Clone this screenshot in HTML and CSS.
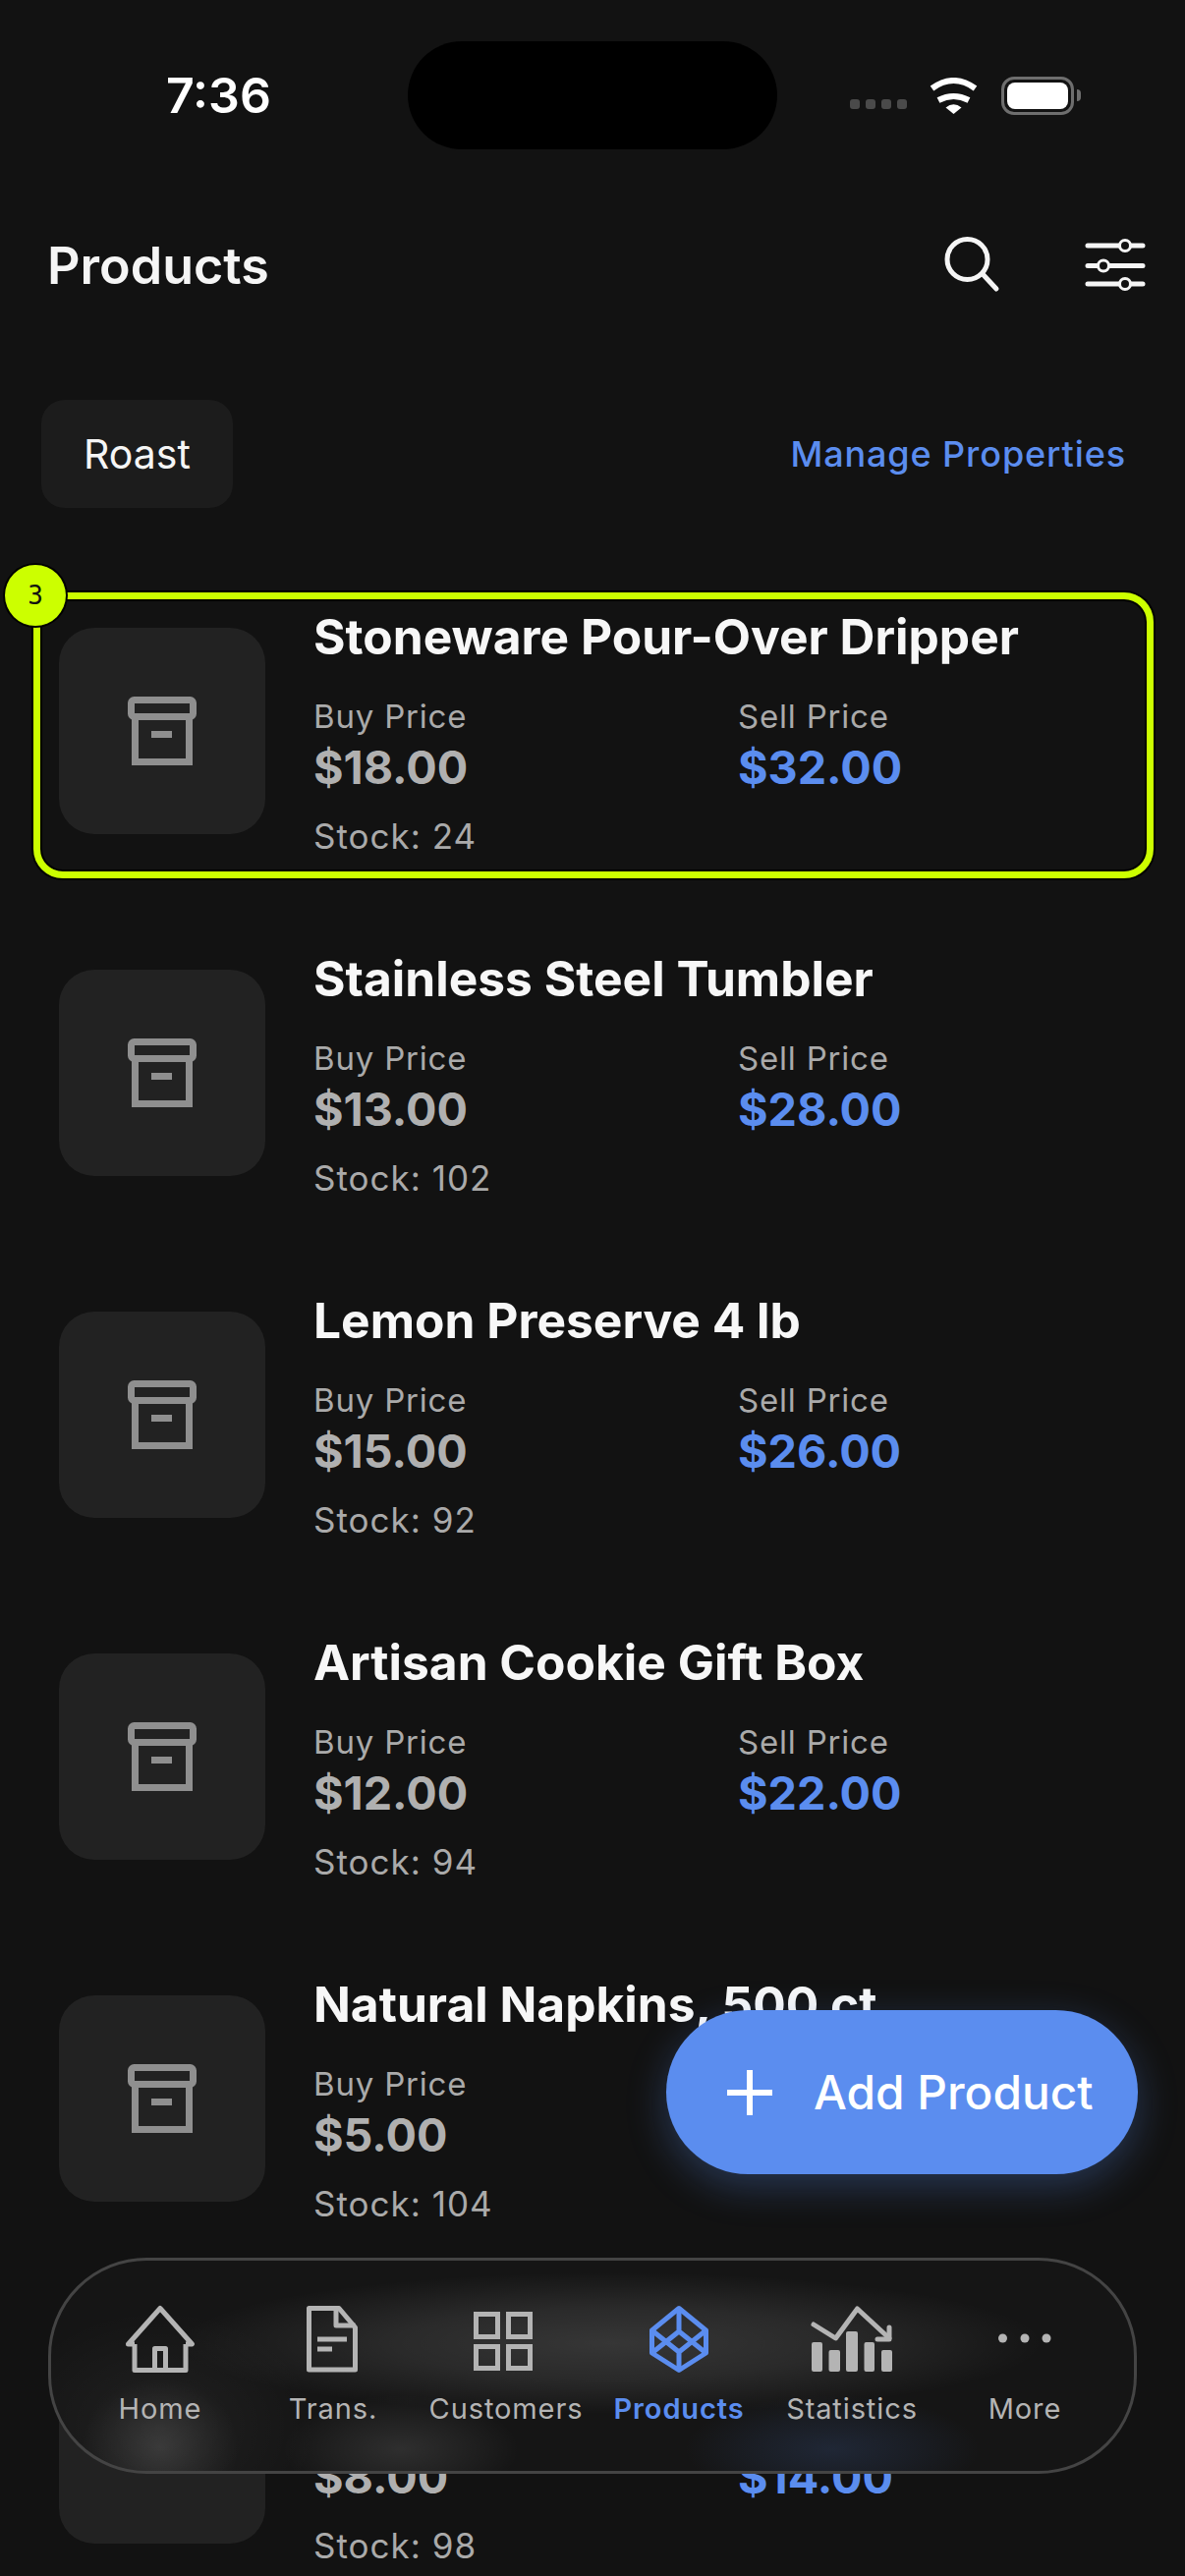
FILE: index.html
```html
<!DOCTYPE html>
<html>
	<head>
		<meta charset="UTF-8">
		<title>Products</title>
		<link rel="stylesheet" href="styles.css">
	</head>
	<body>
		<div id="page">
			<div class="status">
				<div class="time">7:36</div>
				<div class="island"></div>
				<div class="sys">
					<div class="signal"><span></span><span></span><span></span><span></span></div>
					<svg class="wifi" width="51" height="37" viewBox="0 0 51 37" fill="none" stroke="#fff" stroke-width="6">
						<path d="M3.5 11Q25.5 -5 47.5 11"/>
						<path d="M10 23Q25.5 15 41 23"/>
						<path d="M25.5 37L17.5 30.5Q25.5 24 33.5 30.5Z" fill="#fff" stroke="none"/>
					</svg>
					<div class="battery"><div class="charge"></div></div>
					<div class="nub"></div>
				</div>
			</div>

			<div class="header">
				<div class="title">Products</div>
				<div class="tools">
					<svg width="60" height="60" viewBox="0 0 60 60" fill="none" stroke="#f5f5f5" stroke-width="5" stroke-linecap="round">
						<circle cx="26.5" cy="24" r="20.5"/>
						<path d="M43 40L56 54"/>
					</svg>
					<svg width="66" height="60" viewBox="0 0 66 60" fill="none" stroke="#f5f5f5" stroke-linecap="round">
						<path d="M5 10H61M5 30.5H61M5 49H61" stroke-width="5"/>
						<circle cx="43" cy="10" r="5.5" fill="#121212" stroke-width="3"/>
						<circle cx="21" cy="30.5" r="5.5" fill="#121212" stroke-width="3"/>
						<circle cx="43" cy="49" r="5.5" fill="#121212" stroke-width="3"/>
					</svg>
				</div>
			</div>

			<div class="filters">
				<div class="chip">Roast</div>
				<a href="javascript:;" class="manage">Manage Properties</a>
			</div>

			<div class="list">
				<div class="product">
					<div class="thumb"><svg class="box" width="80" height="80" viewBox="0 0 80 80"><use href="#box-icon"/></svg></div>
					<div class="info">
						<div class="name">Stoneware Pour-Over Dripper</div>
						<div class="prices">
							<div><div class="label">Buy Price</div><div class="buy">$18.00</div></div>
							<div><div class="label">Sell Price</div><div class="sell">$32.00</div></div>
						</div>
						<div class="stock">Stock: 24</div>
					</div>
					<div class="mark"><span class="badge">3</span></div>
				</div>
				<div class="product">
					<div class="thumb"><svg class="box" width="80" height="80" viewBox="0 0 80 80"><use href="#box-icon"/></svg></div>
					<div class="info">
						<div class="name">Stainless Steel Tumbler</div>
						<div class="prices">
							<div><div class="label">Buy Price</div><div class="buy">$13.00</div></div>
							<div><div class="label">Sell Price</div><div class="sell">$28.00</div></div>
						</div>
						<div class="stock">Stock: 102</div>
					</div>
				</div>
				<div class="product">
					<div class="thumb"><svg class="box" width="80" height="80" viewBox="0 0 80 80"><use href="#box-icon"/></svg></div>
					<div class="info">
						<div class="name">Lemon Preserve 4 lb</div>
						<div class="prices">
							<div><div class="label">Buy Price</div><div class="buy">$15.00</div></div>
							<div><div class="label">Sell Price</div><div class="sell">$26.00</div></div>
						</div>
						<div class="stock">Stock: 92</div>
					</div>
				</div>
				<div class="product">
					<div class="thumb"><svg class="box" width="80" height="80" viewBox="0 0 80 80"><use href="#box-icon"/></svg></div>
					<div class="info">
						<div class="name">Artisan Cookie Gift Box</div>
						<div class="prices">
							<div><div class="label">Buy Price</div><div class="buy">$12.00</div></div>
							<div><div class="label">Sell Price</div><div class="sell">$22.00</div></div>
						</div>
						<div class="stock">Stock: 94</div>
					</div>
				</div>
				<div class="product">
					<div class="thumb"><svg class="box" width="80" height="80" viewBox="0 0 80 80"><use href="#box-icon"/></svg></div>
					<div class="info">
						<div class="name">Natural Napkins, 500 ct</div>
						<div class="prices">
							<div><div class="label">Buy Price</div><div class="buy">$5.00</div></div>
						</div>
						<div class="stock">Stock: 104</div>
					</div>
				</div>
				<div class="product">
					<div class="thumb"></div>
					<div class="info">
						<div class="prices bottom">
							<div class="buy">$8.00</div>
							<div class="sell">$14.00</div>
						</div>
						<div class="stock">Stock: 98</div>
					</div>
				</div>
			</div>

			<a href="javascript:;" class="fab">
				<svg width="46" height="46" viewBox="0 0 46 46" stroke="#fff" stroke-width="6"><path d="M23 0V46M0 23H46"/></svg>
				<span>Add Product</span>
			</a>

			<div class="nav">
				<div class="item">
					<svg width="90" height="72" viewBox="0 0 90 72" fill="none" stroke="currentColor" stroke-width="5" stroke-linejoin="round">
						<path d="M19 41H12.5L45 4.5 77.5 41H71"/>
						<path d="M19 41V67.5H71V41"/>
						<path d="M39.5 67.5V45.5H50.5V67.5"/>
					</svg>
					<span>Home</span>
				</div>
				<div class="item">
					<svg width="90" height="72" viewBox="0 0 90 72" fill="none" stroke="currentColor" stroke-width="5" stroke-linejoin="round">
						<path d="M20.5 4.5H51L67.5 24V67H20.5Z"/>
						<path d="M48 4.5V22H67.5"/>
						<path d="M29 36H59M29 46H44"/>
					</svg>
					<span>Trans.</span>
				</div>
				<div class="item">
					<svg width="90" height="72" viewBox="0 0 90 72" fill="none" stroke="currentColor" stroke-width="5">
						<rect x="14.5" y="10.5" width="22" height="23"/>
						<rect x="47.5" y="10.5" width="22" height="23"/>
						<rect x="14.5" y="43.5" width="22" height="22"/>
						<rect x="47.5" y="43.5" width="22" height="22"/>
					</svg>
					<span>Customers</span>
				</div>
				<div class="item on">
					<svg width="90" height="72" viewBox="0 0 90 72" fill="none" stroke="currentColor" stroke-width="5" stroke-linejoin="round">
						<path d="M45 4.5L72.5 27V50L45 67.5 17.5 50V27Z"/>
						<path d="M17.5 50L45 28 72.5 50M17.5 27L45 49 72.5 27M45 4.5V28M45 49V67.5"/>
					</svg>
					<span>Products</span>
				</div>
				<div class="item">
					<svg width="90" height="72" viewBox="0 0 90 72" fill="none" stroke="currentColor" stroke-width="5" stroke-linecap="round" stroke-linejoin="round">
						<path d="M6 21L28.5 35 50.5 5 83 35"/>
						<path d="M83 24V36H71"/>
						<g fill="currentColor" stroke="none">
							<rect x="4" y="39" width="11" height="30" rx="2"/>
							<rect x="21.5" y="47" width="11.5" height="22" rx="2"/>
							<rect x="39" y="28" width="12" height="41" rx="2"/>
							<rect x="57.5" y="39" width="10.5" height="30" rx="2"/>
							<rect x="75" y="47" width="11" height="22" rx="2"/>
						</g>
					</svg>
					<span>Statistics</span>
				</div>
				<div class="item">
					<svg width="90" height="72" viewBox="0 0 90 72" fill="currentColor">
						<circle cx="22.5" cy="35" r="4.5"/>
						<circle cx="45" cy="35" r="4.5"/>
						<circle cx="67" cy="35" r="4.5"/>
					</svg>
					<span>More</span>
				</div>
			</div>
		</div>

		<svg class="defs" width="0" height="0">
			<symbol id="box-icon" viewBox="0 0 80 80">
				<g fill="none" stroke="#8f8f8f" stroke-width="7">
					<rect x="8.5" y="7.5" width="63" height="17" rx="3"/>
					<path d="M12.5 27V70.5H67.5V27"/>
				</g>
				<rect x="29" y="39" width="21" height="7" fill="#8f8f8f"/>
			</symbol>
		</svg>
	</body>
</html>
```

FILE: styles.css
```css
*{
	box-sizing: border-box;
}
html, body{
	margin: 0;
	padding: 0;
	background-color: #121212;
}
#page{
	position: relative;
	width: 1206px;
	height: 2622px;
	overflow: hidden;
	padding-top: 42px;
	background-color: #121212;
	color: #f5f5f5;
	font-family: Inter, "Liberation Sans", sans-serif;
}
.defs{
	position: absolute;
}
a{
	text-decoration: none;
}

/* status bar */
.status{
	display: grid;
	grid-template-columns: 1fr 376px 1fr;
	align-items: center;
	height: 110px;
}
.time{
	padding-left: 169px;
	font-size: 50px;
	font-weight: 600;
	color: #fff;
}
.island{
	height: 110px;
	border-radius: 55px;
	background-color: #000;
}
.sys{
	display: flex;
	align-items: center;
	justify-content: flex-end;
	padding-right: 106px;
	height: 40px;
}
.signal{
	display: flex;
	gap: 6px;
	margin: 18px 22px 0 0;
}
.signal span{
	width: 10px;
	height: 10px;
	border-radius: 3px;
	background-color: #4a4a4a;
}
.wifi{
	margin-right: 23px;
}
.battery{
	width: 74px;
	height: 39px;
	padding: 3px;
	border: 3px solid #6e6e6e;
	border-radius: 13px;
}
.charge{
	height: 100%;
	border-radius: 8px;
	background-color: #fff;
}
.nub{
	width: 4px;
	height: 12px;
	margin-left: 3px;
	border-radius: 0 4px 4px 0;
	background-color: #6e6e6e;
}

/* header */
.header{
	display: flex;
	align-items: center;
	justify-content: space-between;
	height: 60px;
	margin-top: 88px;
	padding: 0 38px 0 48px;
}
.title{
	font-size: 52px;
	font-weight: 600;
}
.tools{
	display: flex;
	gap: 84px;
}

.filters{
	display: flex;
	align-items: center;
	justify-content: space-between;
	margin-top: 107px;
	padding: 0 60px 0 42px;
}
.chip{
	height: 110px;
	padding: 0 43px;
	border-radius: 24px;
	background-color: #1c1c1c;
	font-size: 41px;
	line-height: 110px;
}
.manage{
	font-size: 36px;
	font-weight: 500;
	color: #5b8def;
	letter-spacing: .9px;
}

/* product rows */
.list{
	margin-top: 101px;
}
.product{
	position: relative;
	display: flex;
	align-items: center;
	gap: 49px;
	height: 252px;
	margin-bottom: 96px;
	padding-left: 60px;
}
.thumb{
	display: flex;
	align-items: center;
	justify-content: center;
	flex: none;
	width: 210px;
	height: 210px;
	border-radius: 36px;
	background-color: #222;
}
.box{
	margin-top: 2px;
}
.info{
	flex: 1;
	align-self: flex-start;
	padding-top: 2px;
}
.name{
	font-size: 49.7px;
	font-weight: 700;
	line-height: 56px;
	color: #f7f7f7;
}
.prices{
	display: grid;
	grid-template-columns: 432px 1fr;
	margin-top: 33px;
}
.prices.bottom{
	margin-top: 129px;
}
.label{
	font-size: 33px;
	line-height: 40px;
	color: #aaa;
	letter-spacing: .8px;
}
.buy, .sell{
	margin-top: 7px;
	font-size: 46.7px;
	font-weight: 700;
	line-height: 50px;
	color: #b0b0b0;
}
.sell{
	color: #5b8def;
}
.stock{
	margin-top: 25px;
	font-size: 35px;
	line-height: 40px;
	color: #aaa;
	letter-spacing: 1px;
}

/* highlighted row */
.mark{
	position: absolute;
	left: 34px;
	right: 32px;
	top: -15px;
	height: 291px;
	border: 7px solid #ccff00;
	border-radius: 30px;
	box-shadow: 0 0 0 2px #000, inset 0 0 0 2px #000;
}
.badge{
	position: absolute;
	left: -36px;
	top: -35px;
	width: 62px;
	height: 62px;
	border-radius: 50%;
	background-color: #ccff00;
	box-shadow: 0 0 0 2px #000;
	color: #111;
	font-family: "DejaVu Sans Mono", monospace;
	font-size: 26px;
	line-height: 62px;
	text-align: center;
}

/* floating button */
.fab{
	position: absolute;
	left: 678px;
	top: 2046px;
	display: flex;
	align-items: center;
	gap: 42px;
	width: 480px;
	height: 167px;
	padding-left: 62px;
	border-radius: 84px;
	background-color: #5b8def;
	box-shadow: 0 12px 40px rgba(91,141,239,.3);
	color: #fff;
	font-size: 47.8px;
	font-weight: 500;
}

/* bottom nav, the blobs stand for the list blurred behind the glass */
.nav{
	position: absolute;
	left: 49px;
	top: 2298px;
	display: flex;
	width: 1108px;
	height: 220px;
	padding: 44px 23px 0;
	border: 3px solid #444;
	border-radius: 100px;
	background-color: #151515;
	background-image:
		radial-gradient(ellipse 440px 72px at 570px 84px, rgba(255,255,255,.14), rgba(255,255,255,.09) 50%, transparent),
		radial-gradient(ellipse 80px 70px at 111px 190px, rgba(255,255,255,.12), rgba(255,255,255,.05) 55%, transparent),
		radial-gradient(ellipse 160px 120px at 111px 170px, rgba(255,255,255,.05), transparent),
		radial-gradient(ellipse 120px 55px at 356px 192px, rgba(255,255,255,.11), rgba(255,255,255,.05) 55%, transparent),
		radial-gradient(ellipse 150px 55px at 795px 192px, rgba(91,141,239,.15), rgba(91,141,239,.07) 55%, transparent);
}
.item{
	display: flex;
	flex-direction: column;
	align-items: center;
	flex: 1;
	color: #b4b4b4;
	font-size: 29px;
	line-height: 36px;
	letter-spacing: .9px;
}
.item span{
	margin-top: 17px;
	white-space: nowrap;
}
.item.on{
	color: #5b8def;
	font-weight: 600;
}
```
